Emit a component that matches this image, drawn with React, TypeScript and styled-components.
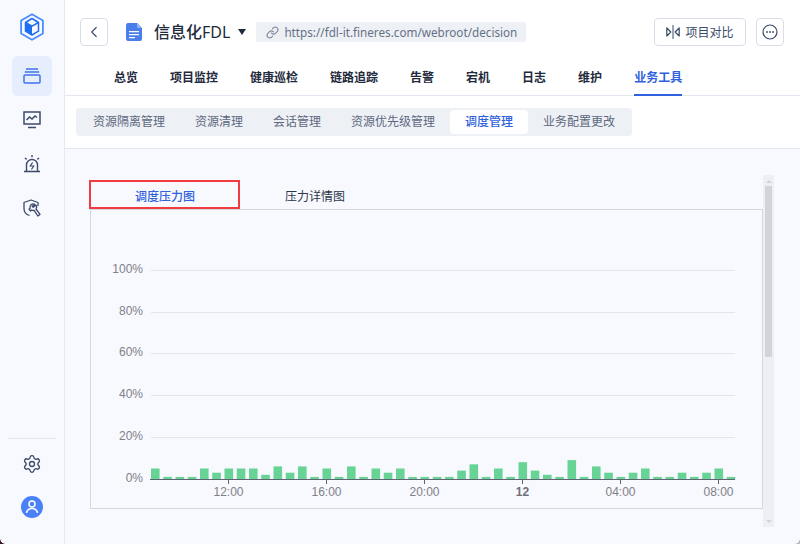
import React from "react";
import styled, { createGlobalStyle } from "styled-components";
import { ChevronLeft, Link as LinkIcon, Settings } from "lucide-react";

const GlobalStyle = createGlobalStyle`
  html, body {
    margin: 0;
    padding: 0;
    height: 100%;
    overflow: hidden;
    background: #f8f9fe;
  }
  * {
    box-sizing: border-box;
  }
  #root {
    height: 100%;
    font-family: "Noto Sans", "Noto Sans CJK SC", "Liberation Sans", sans-serif;
  }
`;

const Shell = styled.div`
  position: relative;
  display: flex;
  height: 100vh;
`;

const Sidebar = styled.aside`
  width: 65px;
  flex-shrink: 0;
  display: flex;
  flex-direction: column;
  align-items: center;
  background: #f8f9fe;
  border-right: 1px solid #e6e8f2;
  padding-top: 13px;
`;

const Logo = styled.div`
  height: 28px;
  margin-bottom: 15px;
  line-height: 0;
`;

const SideItem = styled.div<{ $active?: boolean }>`
  width: 40px;
  height: 40px;
  margin-bottom: 4px;
  display: flex;
  align-items: center;
  justify-content: center;
  border-radius: 6px;
  background: ${(p) => (p.$active ? "#e6eefd" : "transparent")};
  color: ${(p) => (p.$active ? "#3b74f0" : "#3a4a68")};
`;

const SideFooter = styled.div`
  margin-top: auto;
  width: 48px;
  border-top: 1px solid #e3e5ec;
  display: flex;
  flex-direction: column;
  align-items: center;
  padding: 15px 0 26px;
  gap: 22px;
  color: #3a4a68;
`;

const Avatar = styled.div`
  width: 22px;
  height: 22px;
  line-height: 0;
`;

const Main = styled.main`
  flex: 1;
  min-width: 0;
  display: flex;
  flex-direction: column;
`;

const Header = styled.header`
  background: #fff;
  border-bottom: 1px solid #e4e6f0;
  height: 96px;
`;

const TopRow = styled.div`
  height: 64px;
  padding: 18px 16px 0 15px;
  display: flex;
  align-items: flex-start;
`;

const IconButton = styled.button`
  width: 28px;
  height: 28px;
  padding: 0;
  display: flex;
  align-items: center;
  justify-content: center;
  background: #fff;
  border: 1px solid #d9deea;
  border-radius: 4px;
  color: #3a4a68;
`;

const DocMark = styled.div`
  margin: 5px 12px 0 18px;
  line-height: 0;
`;

const Title = styled.div`
  font-size: 16px;
  line-height: 28px;
  color: #1f2a3c;
  display: flex;
  align-items: center;

  b {
    font-weight: 500;
  }
`;

const Caret = styled.span`
  width: 0;
  height: 0;
  margin: 11px 10px 0 8px;
  border-left: 4.5px solid transparent;
  border-right: 4.5px solid transparent;
  border-top: 6px solid #1f2a3c;
`;

const UrlChip = styled.div`
  margin-top: 4px;
  width: 270px;
  height: 20px;
  padding-left: 10px;
  display: flex;
  align-items: center;
  gap: 5px;
  background: #edf0f5;
  border-radius: 2px;
  font-size: 11.7px;
  color: #667085;
  white-space: nowrap;
`;

const Actions = styled.div`
  margin-left: auto;
  display: flex;
  gap: 10px;
`;

const CompareButton = styled.button`
  width: 92px;
  height: 28px;
  padding: 0;
  display: flex;
  align-items: center;
  justify-content: center;
  gap: 5px;
  background: #fff;
  border: 1px solid #d9deea;
  border-radius: 4px;
  font-family: inherit;
  font-size: 12px;
  color: #3a4a68;
`;

const Nav = styled.nav`
  height: 32px;
  padding-left: 49px;
  display: flex;
  gap: 32px;
`;

const NavItem = styled.div<{ $active?: boolean }>`
  height: 32px;
  padding-top: 5px;
  font-size: 12px;
  line-height: 18px;
  font-weight: 700;
  color: ${(p) => (p.$active ? "#2f62dc" : "#1f2a3c")};
  border-bottom: 2px solid ${(p) => (p.$active ? "#2f62dc" : "transparent")};
`;

const SubBar = styled.div`
  height: 53px;
  background: #fff;
  border-bottom: 1px solid #e4e6f0;
  padding: 12px 0 0 11px;
`;

const Segments = styled.div`
  display: inline-flex;
  height: 28px;
  padding: 2px;
  background: #edf0f5;
  border-radius: 4px;
`;

const Segment = styled.div<{ $active?: boolean }>`
  padding: 0 15px;
  font-size: 12px;
  line-height: 24px;
  border-radius: 4px;
  color: ${(p) => (p.$active ? "#2f62dc" : "#5d6880")};
  font-weight: ${(p) => (p.$active ? 500 : 400)};
  background: ${(p) => (p.$active ? "#fff" : "transparent")};
`;

const Content = styled.section`
  flex: 1;
  min-height: 0;
  display: flex;
  padding: 26px 26px 17px 25px;
`;

const Panel = styled.div`
  flex: 1;
  min-width: 0;
  padding-top: 5px;
`;

const ChartTabs = styled.div`
  display: flex;
  height: 29px;
`;

const ChartTab = styled.div<{ $active?: boolean }>`
  width: 150px;
  height: 29px;
  text-align: center;
  font-size: 12px;
  line-height: 33px;
  color: ${(p) => (p.$active ? "#2f62dc" : "#2b3648")};
  font-weight: ${(p) => (p.$active ? 500 : 400)};
`;

const Highlight = styled.div`
  position: absolute;
  left: 89px;
  top: 180px;
  width: 151px;
  height: 29px;
  border: 2px solid #f23b3f;
  pointer-events: none;
`;

const ChartBox = styled.div`
  height: 300px;
  border: 1px solid #d3d7de;
  line-height: 0;
`;

const ScrollTrack = styled.div`
  width: 11px;
  flex-shrink: 0;
  height: 352px;
  background: #edeff4;
  padding: 0 2px;
  display: flex;
  flex-direction: column;
  align-items: center;
`;

const ScrollArrow = styled.span<{ $down?: boolean }>`
  width: 0;
  height: 0;
  margin: ${(p) => (p.$down ? "auto 0 4px" : "5px 0 3px")};
  border-left: 3.5px solid transparent;
  border-right: 3.5px solid transparent;
  ${(p) =>
    p.$down
      ? "border-top: 3.5px solid #d0d4da;"
      : "border-bottom: 3.5px solid #d0d4da;"}
`;

const ScrollThumb = styled.div`
  width: 7px;
  height: 171px;
  background: #d1d5db;
`;

const Corner = styled.span<{ $right?: boolean }>`
  position: absolute;
  bottom: 0;
  width: 5px;
  height: 5px;
  ${(p) =>
    p.$right
      ? "right: 0; background: radial-gradient(circle at 0 0, transparent 4.4px, #b9bbc0 5px);"
      : "left: 0; background: radial-gradient(circle at 100% 0, transparent 4.4px, #3a1a20 5px);"}
`;

const AxisText = styled.text<{ $strong?: boolean }>`
  font-family: "Liberation Sans", Arial, sans-serif;
  font-size: 12px;
  fill: ${(p) => (p.$strong ? "#6e7079" : "#7f8088")};
  font-weight: ${(p) => (p.$strong ? 700 : 400)};
`;

const navItems = ["总览", "项目监控", "健康巡检", "链路追踪", "告警", "宕机", "日志", "维护", "业务工具"];
const segments = ["资源隔离管理", "资源清理", "会话管理", "资源优先级管理", "调度管理", "业务配置更改"];

const pressure = [
  5, 1, 1, 1, 5, 3, 5, 5, 5, 2, 6, 3, 6, 1, 5, 1, 6, 1, 5, 3, 5, 1, 1, 1,
  1, 4, 7, 1, 5, 1, 8, 4, 2, 1, 9, 1, 6, 3, 1, 3, 5, 1, 1, 3, 1, 3, 5, 1,
];

const yTicks = [
  { label: "100%", y: 270.5 },
  { label: "80%", y: 312.5 },
  { label: "60%", y: 353.5 },
  { label: "40%", y: 395.5 },
  { label: "20%", y: 437.5 },
];

const xTicks = [
  { label: "12:00", x: 228.5 },
  { label: "16:00", x: 326.5 },
  { label: "20:00", x: 424.5 },
  { label: "12", x: 522.5, strong: true },
  { label: "04:00", x: 620.5 },
  { label: "08:00", x: 718.5 },
];

const LogoMark = () => (
  <svg width="24" height="28" viewBox="0 0 24 28" fill="none">
    <path d="M12 1.200 22.900 7.500v13L12 26.800 1.100 20.500v-13z" stroke="#4a8dff" strokeWidth="1.800" strokeLinejoin="round" />
    <path d="M5.500 9.500 12 13.200V22l-6.500-3.800z" fill="#1f6ff2" />
    <path d="M12 5.500 18.500 9.500v8.700L12 22l-6.500-3.800V9.500zM5.500 9.500l6.500 3.700 6.500-3.700" stroke="#1f6ff2" strokeWidth="1.500" strokeLinejoin="round" />
  </svg>
);

const LayersIcon = () => (
  <svg width="18" height="16" viewBox="0 0 18 16" fill="none" stroke="currentColor" strokeWidth="1.500">
    <path d="M3 1h12M1.800 4h14.400" />
    <rect x="1" y="7" width="16" height="8" rx="1" />
  </svg>
);

const MonitorIcon = () => (
  <svg width="18" height="18" viewBox="0 0 18 18" fill="none" stroke="currentColor" strokeWidth="1.500">
    <rect x="1" y="1" width="16" height="12" />
    <path d="m3.500 9 3-3 2.500 2 3-3 2 1.500M5 16.500h8" />
  </svg>
);

const AlarmIcon = () => (
  <svg width="18" height="19" viewBox="0 0 18 19" fill="none" stroke="currentColor" strokeWidth="1.400">
    <path d="M3.500 16V10a5.500 5.500 0 0 1 11 0v6M1 16.500h16M9 0v2.200M2 3l1.600 1.400M16 3l-1.600 1.400" />
    <path d="M9.600 7.500 7.300 11h3.400l-2.300 3.500" strokeWidth="1.200" />
  </svg>
);

const ToolIcon = () => (
  <svg width="18" height="18" viewBox="0 0 18 18" fill="none" stroke="currentColor" strokeWidth="1.300" strokeLinejoin="round">
    <path d="M6.500 16.500C3 15.500 1 13 1 9.500V3.500L8 1l7 2.500V7" />
    <path d="M11.500 5.200a3.200 3.200 0 0 0-4.300 4l-1.200 1L7.500 12l1.200-1a3.200 3.200 0 0 0 2.500.4l3.600 5.600 2.200-1.600-4-5.400a3.200 3.200 0 0 0-.3-4l-2.400 2.300-1.100-1z" />
  </svg>
);

const DocIcon = () => (
  <svg width="16" height="18" viewBox="0 0 16 18">
    <path d="M2 0h9l5 5v11a2 2 0 0 1-2 2H2a2 2 0 0 1-2-2V2a2 2 0 0 1 2-2z" fill="#4a7ee8" />
    <path d="M11 0l5 5h-4a1 1 0 0 1-1-1z" fill="#8fb0f2" />
    <path d="M3 8h10v1.300H3zM3 11h10v1.300H3zM3 14h6v1.300H3z" fill="#fff" />
  </svg>
);

const CompareIcon = () => (
  <svg width="14" height="14" viewBox="0 0 14 14" fill="none" stroke="#3a4a68" strokeWidth="1.200">
    <path d="M.8 3v8l4-4zM13.200 3v8l-4-4z" strokeLinejoin="round" />
    <path d="M7 0v14" stroke="#7c8698" strokeWidth="1.500" />
  </svg>
);

const MoreIcon = () => (
  <svg width="16" height="16" viewBox="0 0 16 16" fill="none">
    <circle cx="8" cy="8" r="7" stroke="#3a4a68" strokeWidth="1.200" />
    <circle cx="5" cy="8" r="0.900" fill="#3a4a68" />
    <circle cx="8" cy="8" r="0.900" fill="#3a4a68" />
    <circle cx="11" cy="8" r="0.900" fill="#3a4a68" />
  </svg>
);

const UserIcon = () => (
  <svg width="22" height="22" viewBox="0 0 22 22" fill="none">
    <circle cx="11" cy="11" r="11" fill="#4a80f8" />
    <circle cx="11" cy="8" r="3" stroke="#fff" strokeWidth="1.500" />
    <path d="M5.500 17c.5-3 2.800-4.500 5.500-4.500s5 1.500 5.500 4.500" stroke="#fff" strokeWidth="1.500" />
  </svg>
);

const PressureChart = () => (
  <svg width="671" height="298" viewBox="91 210 671 298">
    {yTicks.map((t) => (
      <g key={t.label}>
        <line x1="151" x2="735" y1={t.y} y2={t.y} stroke="#e2e4f0" />
        <AxisText x="143" y={t.y + 2.5} textAnchor="end">{t.label}</AxisText>
      </g>
    ))}
    <AxisText x="143" y="482" textAnchor="end">0%</AxisText>
    {pressure.map((v, i) => (
      <rect
        key={i}
        x={151 + i * 12.25}
        y={479 - v * 2.1}
        width="8.600"
        height={v * 2.1}
        fill="#67d495"
      />
    ))}
    <line x1="150" x2="735" y1="479.500" y2="479.500" stroke="#5f6570" />
    {xTicks.map((t) => (
      <g key={t.label}>
        <line x1={t.x} x2={t.x} y1="479" y2="484" stroke="#5f6570" />
        <AxisText x={t.x} y="496" textAnchor="middle" $strong={t.strong}>{t.label}</AxisText>
      </g>
    ))}
  </svg>
);

const App = () => {
  return (
    <Shell>
      <GlobalStyle />
      <Sidebar>
        <Logo>
          <LogoMark />
        </Logo>
        <SideItem $active>
          <LayersIcon />
        </SideItem>
        <SideItem>
          <MonitorIcon />
        </SideItem>
        <SideItem>
          <AlarmIcon />
        </SideItem>
        <SideItem>
          <ToolIcon />
        </SideItem>
        <SideFooter>
          <Settings size={20} strokeWidth={1.6} />
          <Avatar>
            <UserIcon />
          </Avatar>
        </SideFooter>
      </Sidebar>
      <Main>
        <Header>
          <TopRow>
            <IconButton>
              <ChevronLeft size={18} strokeWidth={1.5} />
            </IconButton>
            <DocMark>
              <DocIcon />
            </DocMark>
            <Title>
              <b>信息化</b>FDL
            </Title>
            <Caret />
            <UrlChip>
              <LinkIcon size={13} color="#7c8698" />
              https://fdl-it.fineres.com/webroot/decision
            </UrlChip>
            <Actions>
              <CompareButton>
                <CompareIcon />
                项目对比
              </CompareButton>
              <IconButton>
                <MoreIcon />
              </IconButton>
            </Actions>
          </TopRow>
          <Nav>
            {navItems.map((item) => (
              <NavItem key={item} $active={item === "业务工具"}>
                {item}
              </NavItem>
            ))}
          </Nav>
        </Header>
        <SubBar>
          <Segments>
            {segments.map((item) => (
              <Segment key={item} $active={item === "调度管理"}>
                {item}
              </Segment>
            ))}
          </Segments>
        </SubBar>
        <Content>
          <Panel>
            <ChartTabs>
              <ChartTab $active>调度压力图</ChartTab>
              <ChartTab>压力详情图</ChartTab>
            </ChartTabs>
            <ChartBox>
              <PressureChart />
            </ChartBox>
          </Panel>
          <ScrollTrack>
            <ScrollArrow />
            <ScrollThumb />
            <ScrollArrow $down />
          </ScrollTrack>
        </Content>
      </Main>
      <Highlight />
      <Corner />
      <Corner $right />
    </Shell>
  );
};

export default App;
